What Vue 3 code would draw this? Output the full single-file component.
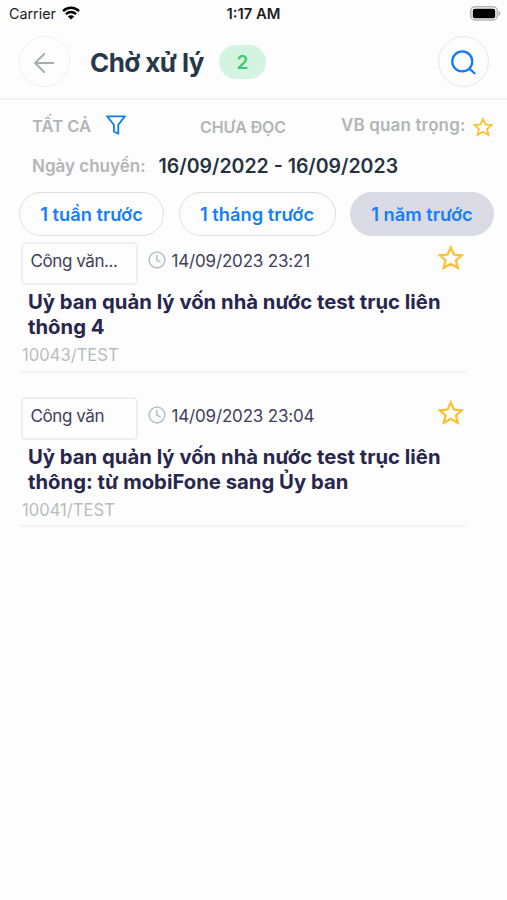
<script setup>
const periods = [
  { label: '1 tuần trước', active: false },
  { label: '1 tháng trước', active: false },
  { label: '1 năm trước', active: true },
]
const documents = [
  {
    type: 'Công văn...',
    date: '14/09/2023 23:21',
    lines: ['Uỷ ban quản lý vốn nhà nước test trục liên', 'thông 4'],
    number: '10043/TEST',
  },
  {
    type: 'Công văn',
    date: '14/09/2023 23:04',
    lines: ['Uỷ ban quản lý vốn nhà nước test trục liên', 'thông: từ mobiFone sang Ủy ban'],
    number: '10041/TEST',
  },
]
</script>

<template>
  <div class="screen">
    <div class="status">
      <div class="carrier">
        <span>Carrier</span>
        <svg class="wifi" viewBox="0 0 18 14">
          <path d="M1 5.1C5.6.7 12.4.7 17 5.1" />
          <path d="M3.9 8.2c3-2.8 7.2-2.8 10.2 0" />
          <path class="dot" d="M9 13.6 5.8 10.4c1.8-1.7 4.6-1.7 6.4 0z" />
        </svg>
      </div>
      <span class="time">1:17 AM</span>
      <svg class="battery" viewBox="0 0 31 15">
        <rect x=".8" y=".8" width="26.4" height="13.2" rx="4" fill="#fdfdfd" stroke="#b5b5b5" stroke-width="1.5" />
        <rect x="2.8" y="2.8" width="22.4" height="9.4" rx="2" fill="#000" />
        <path d="M28.6 5c2.3.8 2.3 4 0 4.9z" fill="#a8a8a8" />
      </svg>
    </div>

    <header class="header">
      <button class="round" aria-label="Quay lại">
        <svg class="arrow" viewBox="0 0 20 20"><path d="M19.2 10H1M10.2 1 1 10l9.2 9" /></svg>
      </button>
      <h1>Chờ xử lý</h1>
      <span class="badge">2</span>
      <button class="round search" aria-label="Tìm kiếm">
        <svg class="lens" viewBox="0 0 26 26"><circle cx="11.7" cy="11.9" r="10.4" /><path d="m19.4 19.6 5 4.6" /></svg>
      </button>
    </header>

    <div class="filters">
      <span class="all">TẤT CẢ</span>
      <svg class="funnel" viewBox="0 0 20 20"><path d="M1 1.3h18l-6.7 8.5v8.9l-4.4-2.2V9.8z" /></svg>
      <span class="unread">CHƯA ĐỌC</span>
      <span class="important">VB quan trọng:</span>
      <svg class="star small" viewBox="0 0 26 26"><path d="m13 2.6 3.2 7.1 8 .8-5.9 5.1 1.8 7.7-7.1-4.1-7.1 4.1 1.8-7.7-5.9-5.1 8-.8z" /></svg>
    </div>

    <div class="range">
      <span class="range-label">Ngày chuyển:</span>
      <span class="range-value">16/09/2022 - 16/09/2023</span>
    </div>

    <div class="periods">
      <button v-for="p in periods" :key="p.label" class="period" :class="{ active: p.active }">{{ p.label }}</button>
    </div>

    <main class="list">
      <article v-for="d in documents" :key="d.number" class="doc">
        <div class="meta">
          <span class="tag">{{ d.type }}</span>
          <svg class="clock" viewBox="0 0 18 18"><circle cx="9" cy="9" r="7.9" /><path d="M8.8 4.2V9l3.2 1.8" /></svg>
          <span class="date">{{ d.date }}</span>
          <svg class="star" viewBox="0 0 26 26"><path d="m13 2.6 3.2 7.1 8 .8-5.9 5.1 1.8 7.7-7.1-4.1-7.1 4.1 1.8-7.7-5.9-5.1 8-.8z" /></svg>
        </div>
        <h2><span v-for="line in d.lines" :key="line">{{ line }}</span></h2>
        <p class="number">{{ d.number }}</p>
      </article>
    </main>
  </div>
</template>

<style>
body { background: #fdfdfd; }
</style>

<style scoped>
.screen {
  width: 507px;
  height: 900px;
  overflow: hidden;
  background: #fdfdfd;
  font-family: Inter, "Liberation Sans", sans-serif;
  white-space: nowrap;
}
svg { display: block; flex: none; fill: none; stroke-linecap: round; stroke-linejoin: round; }
button { box-sizing: border-box; padding: 0; font: inherit; background: none; }
.status {
  display: grid;
  grid-template-columns: 1fr auto 1fr;
  align-items: center;
  height: 27px;
  padding: 0 6px 0 9px;
  font-size: 14.3px;
  color: #1c1c1c;
}
.carrier { display: flex; align-items: center; gap: 6px; }
.wifi { width: 18px; height: 14px; margin-top: -1px; stroke: #000; stroke-width: 2.5; stroke-linecap: butt; }
.wifi .dot { fill: #000; stroke: none; }
.time { margin-right: 3px; font-size: 14.8px; font-weight: 600; }
.battery { width: 31px; height: 15px; justify-self: end; }
.header {
  box-sizing: border-box;
  display: flex;
  align-items: center;
  height: 73px;
  padding: 0 18px 2px 19px;
  border-bottom: 2px solid #f2f2f3;
}
.round {
  display: flex;
  align-items: center;
  justify-content: center;
  width: 51px;
  height: 51px;
  border: 1px solid #efeff0;
  border-radius: 50%;
}
.arrow { width: 20px; height: 20px; margin: 2px 1px 0 0; stroke: #a9adb1; stroke-width: 2; }
h1 {
  box-sizing: border-box;
  width: 149px;
  margin: 2px 0 0;
  padding-left: 20px;
  font-size: 26px;
  line-height: 34px;
  font-weight: 700;
  letter-spacing: -.55px;
  color: #263849;
}
.badge {
  width: 47px;
  height: 34px;
  border-radius: 17px;
  background: #d5f3e1;
  font-size: 19px;
  line-height: 35px;
  font-weight: 600;
  text-align: center;
  color: #3ac970;
}
.search { margin-left: auto; border-color: #dfe7fa; }
.lens { width: 25px; height: 25px; margin-top: 1px; stroke: #1479f5; stroke-width: 2.3; }
.filters {
  display: flex;
  align-items: center;
  height: 52px;
  padding: 0 14px 0 32px;
  font-size: 16px;
  font-weight: 600;
  color: #b2b5b8;
}
.all { width: 73.5px; font-size: 16.6px; }
.funnel { width: 20px; height: 20px; margin-top: -2px; stroke: #087df2; stroke-width: 1.8; }
.unread { margin: 1px 0 0 74.5px; letter-spacing: -.1px; }
.important { margin: -2px 7.5px 0 auto; font-size: 17px; letter-spacing: .14px; }
.star { width: 25.5px; height: 25.5px; stroke: #fac02e; stroke-width: 2.3; stroke-linejoin: miter; }
.star.small { width: 20px; height: 20px; margin-top: 2px; }
.range { display: flex; align-items: center; gap: 13px; height: 27px; padding-left: 32px; }
.range-label { font-size: 17px; font-weight: 600; color: #b2b5b8; }
.range-value { font-size: 19.5px; font-weight: 600; color: #26323f; }
.periods { display: grid; grid-template-columns: 145px 157px 144px; gap: 14.5px; margin: 13px 0 0 19px; }
.period {
  height: 44px;
  padding-bottom: 1px;
  border: 1.5px solid #dedee1;
  border-radius: 22px;
  font-size: 18.3px;
  font-weight: 600;
  color: #147ff7;
}
.period.active { background: #dadae5; border-color: #dadae5; }
.list { padding: 6px 41px 0 21px; }
.doc { box-sizing: border-box; height: 130.5px; margin-bottom: 24px; border-bottom: 2px solid #f1f2f4; }
.meta { display: flex; align-items: flex-start; height: 43px; }
.tag {
  box-sizing: border-box;
  width: 117px;
  height: 43px;
  padding-left: 7.5px;
  border: 2px solid #eceef0;
  border-radius: 5px;
  font-size: 17px;
  line-height: 34px;
  letter-spacing: -.42px;
  color: #41405c;
}
.clock { width: 18px; height: 18px; margin: 9px 0 0 10px; stroke: #b9bfc4; stroke-width: 1.5; }
.date { margin-left: 5.5px; font-size: 17px; line-height: 39px; letter-spacing: -.17px; color: #3f405a; }
.meta .star { margin: 3px 2.5px 0 auto; }
h2 { margin: 4px 0 0 7px; font-size: 20.3px; line-height: 25px; font-weight: 700; letter-spacing: 0; color: #29264e; }
h2 span { display: block; }
.number { margin: 6px 0 0 1px; font-size: 16.6px; line-height: 20px; color: #b9bcbf; }
</style>
